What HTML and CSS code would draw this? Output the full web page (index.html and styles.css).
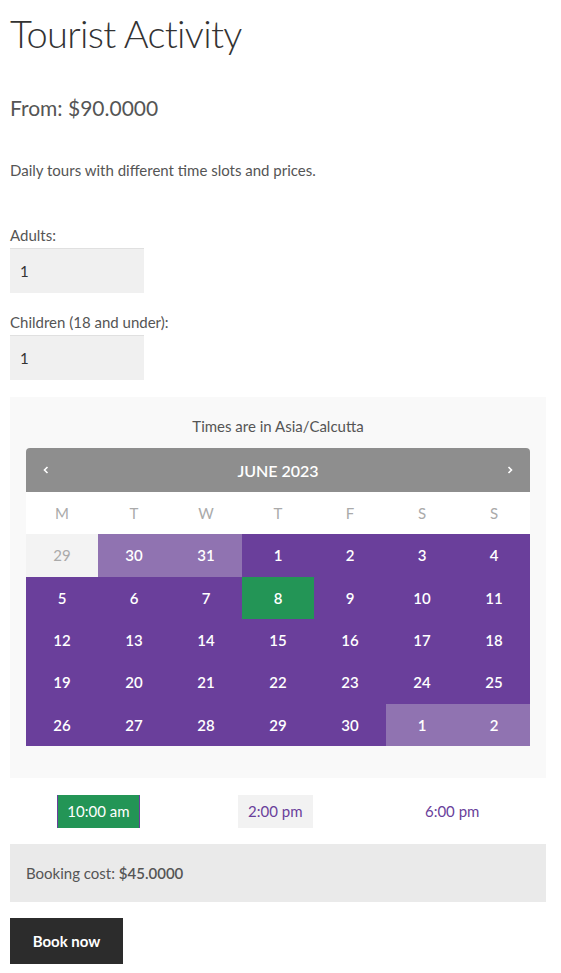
FILE: index.html
```html
<!DOCTYPE html>
<html lang="en">
<head>
<meta charset="utf-8">
<title>Tourist Activity</title>
<link rel="stylesheet" href="styles.css">
</head>
<body>
<div class="page">
  <h1 class="title">Tourist Activity</h1>
  <p class="price">From: $90.0000</p>
  <p class="desc">Daily tours with different time slots and prices.</p>

  <form class="booking-form">
    <div class="field">
      <label class="field-label">Adults:</label>
      <div class="field-input">1</div>
    </div>
    <div class="field">
      <label class="field-label">Children (18 and under):</label>
      <div class="field-input">1</div>
    </div>

    <div class="picker">
      <div class="tz">Times are in Asia/Calcutta</div>
      <div class="calendar">
        <div class="cal-head">
          <span class="nav"><svg width="6" height="8" viewBox="0 0 6 8"><polyline points="4.5,1 1.5,4 4.5,7" fill="none" stroke="#fff" stroke-width="1.6"/></svg></span>
          <span class="month">JUNE 2023</span>
          <span class="nav"><svg width="6" height="8" viewBox="0 0 6 8"><polyline points="1.5,1 4.5,4 1.5,7" fill="none" stroke="#fff" stroke-width="1.6"/></svg></span>
        </div>
        <div class="cal-grid">
          <div class="wd">M</div><div class="wd">T</div><div class="wd">W</div><div class="wd">T</div><div class="wd">F</div><div class="wd">S</div><div class="wd">S</div>

          <div class="d off">29</div><div class="d other">30</div><div class="d other">31</div><div class="d">1</div><div class="d">2</div><div class="d">3</div><div class="d">4</div>
          <div class="d">5</div><div class="d">6</div><div class="d">7</div><div class="d sel">8</div><div class="d">9</div><div class="d">10</div><div class="d">11</div>
          <div class="d">12</div><div class="d">13</div><div class="d">14</div><div class="d">15</div><div class="d">16</div><div class="d">17</div><div class="d">18</div>
          <div class="d">19</div><div class="d">20</div><div class="d">21</div><div class="d">22</div><div class="d">23</div><div class="d">24</div><div class="d">25</div>
          <div class="d">26</div><div class="d">27</div><div class="d">28</div><div class="d">29</div><div class="d">30</div><div class="d other">1</div><div class="d other">2</div>
        </div>
      </div>
    </div>

    <ul class="slots">
      <li class="slot"><span class="slot-btn active">10:00 am</span></li>
      <li class="slot"><span class="slot-btn hover">2:00 pm</span></li>
      <li class="slot"><span class="slot-btn">6:00 pm</span></li>
    </ul>

    <div class="cost">Booking cost: <strong>$45.0000</strong></div>

    <button type="button" class="book">Book now</button>
  </form>
</div>
</body>
</html>
```
FILE: styles.css
```css
* { box-sizing: border-box; }

body {
  margin: 0;
  background: #fff;
  font-family: "Lato", "Noto Sans", sans-serif;
  font-size: 15px;
  line-height: 25px;
  color: #555;
}

.page {
  width: 536px;
  margin-left: 10px;
  padding-top: 9px;
}

.title {
  margin: 0;
  font-size: 38px;
  line-height: 48px;
  font-weight: 300;
  color: #333;
  letter-spacing: -0.7px;
}

.price {
  margin: 36px 0 0;
  font-size: 21px;
  line-height: 30px;
  color: #555;
}

.desc {
  margin: 35px 0 0;
}

.booking-form {
  margin-top: 40px;
}

.field { margin-bottom: 17px; }

.field-label {
  display: block;
  line-height: 25px;
}

.field-input {
  width: 134px;
  height: 45px;
  padding: 10px;
  background: #f0f0f0;
  border-top: 1px solid #e0e0e0;
  color: #333;
  line-height: 24px;
}

.picker {
  background: #f9f9f9;
  padding: 16px 16px 32px;
}

.tz {
  text-align: center;
  line-height: 26px;
}

.calendar {
  margin-top: 9px;
}

.cal-head {
  height: 44px;
  background: #8e8e8e;
  border-radius: 4px 4px 0 0;
  display: flex;
  align-items: center;
  justify-content: space-between;
  padding: 0 17px 0 17px;
  color: #fff;
}

.nav {
  width: 6px;
  height: 8px;
  display: flex;
}

.month {
  font-weight: 600;
  font-size: 16px;
}

.cal-grid {
  display: grid;
  grid-template-columns: repeat(7, 72px);
  grid-template-rows: 42px 43px 42px 42px 43px 42px;
}

.wd {
  background: #fff;
  color: #aaa;
  display: flex;
  align-items: center;
  justify-content: center;
}

.d {
  background: #6a3f9b;
  color: #fff;
  font-weight: 600;
  display: flex;
  align-items: center;
  justify-content: center;
}

.d.other { background: #9073b1; }
.d.off { background: #f3f3f3; color: #aaa; font-weight: 400; }
.d.sel { background: #239556; }

.slots {
  list-style: none;
  margin: 17px 0 0;
  padding: 0;
  display: flex;
}

.slot {
  width: 33%;
  text-align: center;
}

.slot-btn {
  display: inline-block;
  height: 33px;
  line-height: 33px;
  padding: 0 10px;
  color: #6a3f9b;
}

.slot-btn.active {
  background: #239556;
  color: #fff;
  padding: 0 9px;
  border-left: 1px solid #6a3f9b;
  border-right: 1px solid #6a3f9b;
}

.slot-btn.hover {
  background: #f2f2f2;
}

.cost {
  margin-top: 16px;
  background: #eaeaea;
  padding: 16px;
  height: 58px;
  line-height: 26px;
}

.cost strong { font-weight: 600; }

.book {
  margin-top: 16px;
  display: block;
  width: 113px;
  height: 46px;
  border: 0;
  background: #2c2c2c;
  color: #fff;
  font-family: inherit;
  font-size: 15px;
  font-weight: 700;
  padding: 0;
}
```
